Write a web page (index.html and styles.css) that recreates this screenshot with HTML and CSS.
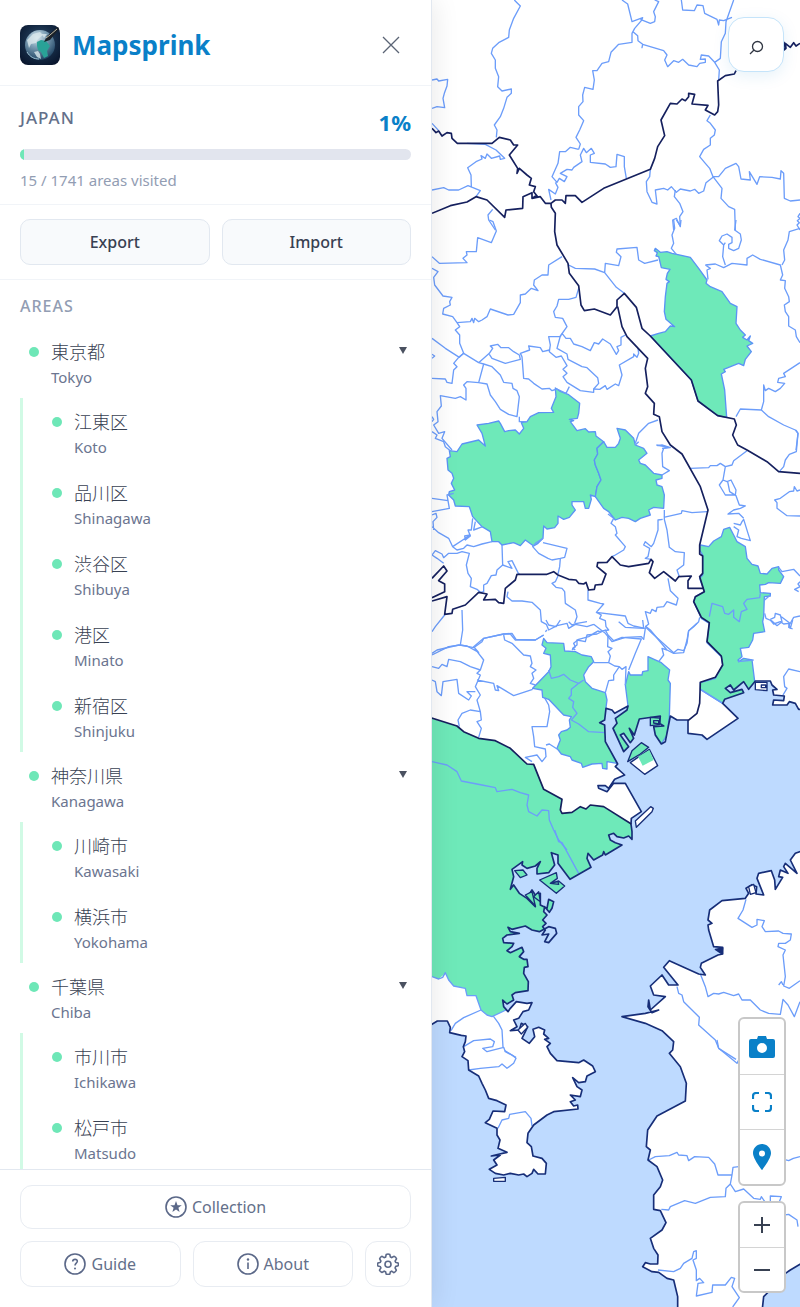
FILE: index.html
```html
<!DOCTYPE html>
<html lang="en">
<head>
<meta charset="utf-8">
<meta name="viewport" content="width=device-width, initial-scale=1">
<title>Mapsprink</title>
<link rel="stylesheet" href="styles.css">
</head>
<body>
<div class="app">
  <aside class="sidebar">
    <header class="brand">
      <svg class="logo" viewBox="0 0 40 40" aria-hidden="true">
        <defs>
          <radialGradient id="space" cx=".5" cy=".4" r=".7"><stop offset="0" stop-color="#31506f"/><stop offset=".6" stop-color="#142943"/><stop offset="1" stop-color="#08142b"/></radialGradient>
          <radialGradient id="globe" cx=".4" cy=".25" r=".8"><stop offset="0" stop-color="#dceaf0"/><stop offset=".4" stop-color="#7d9fb5"/><stop offset="1" stop-color="#183c5c"/></radialGradient>
        </defs>
        <rect width="40" height="40" rx="8" fill="url(#space)"/>
        <circle cx="20" cy="20" r="15" fill="url(#globe)"/>
        <path d="M7 15l6-6 7-2 3 3-5 4-2 4-5 1-2 4zM14 27l4-1 2 3 1 5-4-2zM22 9l5 0-3 4z" fill="#dbe8ec" opacity=".8"/>
        <path d="M17 17l4-2 5 1 4 5-3 5 1 5-4 2-3-6-3-2-1-4z" fill="#29a297"/>
        <path d="M7 27c3 5 7 7 12 7" fill="none" stroke="#9fc3d4" stroke-width="1"/>
        <path d="M24 17l3-6L38 2l1 2-9 11z" fill="#1a2128"/>
        <path d="M26 13l4-3 7-6" stroke="#c1bba6" stroke-width="1" fill="none"/>
      </svg>
      <h1 class="title">Mapsprink</h1>
      <button class="close" type="button" aria-label="Close"><svg viewBox="0 0 18 18"><path d="M1 1l16 16M17 1L1 17"/></svg></button>
    </header>
    <section class="progress">
      <div class="progress-head"><h2 class="country">JAPAN</h2><strong class="percent">1%</strong></div>
      <div class="track"><div class="fill" style="width:1%"></div></div>
      <p class="count">15 / 1741 areas visited</p>
    </section>
    <section class="transfer">
      <button class="soft" type="button">Export</button>
      <button class="soft" type="button">Import</button>
    </section>
    <section class="areas">
      <h2 class="areas-title">AREAS</h2>
      <ul class="regions">
        <li>
          <div class="area"><i class="dot"></i><span class="names"><b lang="ja">東京都</b><span>Tokyo</span></span><button class="caret" type="button" aria-label="Collapse Tokyo"></button></div>
          <ul class="cities">
            <li class="area"><i class="dot"></i><span class="names"><b lang="ja">江東区</b><span>Koto</span></span></li>
            <li class="area"><i class="dot"></i><span class="names"><b lang="ja">品川区</b><span>Shinagawa</span></span></li>
            <li class="area"><i class="dot"></i><span class="names"><b lang="ja">渋谷区</b><span>Shibuya</span></span></li>
            <li class="area"><i class="dot"></i><span class="names"><b lang="ja">港区</b><span>Minato</span></span></li>
            <li class="area"><i class="dot"></i><span class="names"><b lang="ja">新宿区</b><span>Shinjuku</span></span></li>
          </ul>
        </li>
        <li>
          <div class="area"><i class="dot"></i><span class="names"><b lang="ja">神奈川県</b><span>Kanagawa</span></span><button class="caret" type="button" aria-label="Collapse Kanagawa"></button></div>
          <ul class="cities">
            <li class="area"><i class="dot"></i><span class="names"><b lang="ja">川崎市</b><span>Kawasaki</span></span></li>
            <li class="area"><i class="dot"></i><span class="names"><b lang="ja">横浜市</b><span>Yokohama</span></span></li>
          </ul>
        </li>
        <li>
          <div class="area"><i class="dot"></i><span class="names"><b lang="ja">千葉県</b><span>Chiba</span></span><button class="caret" type="button" aria-label="Collapse Chiba"></button></div>
          <ul class="cities">
            <li class="area"><i class="dot"></i><span class="names"><b lang="ja">市川市</b><span>Ichikawa</span></span></li>
            <li class="area"><i class="dot"></i><span class="names"><b lang="ja">松戸市</b><span>Matsudo</span></span></li>
          </ul>
        </li>
      </ul>
    </section>
    <footer class="footer">
      <button class="ghost" type="button"><svg class="icon" viewBox="0 0 22 22"><circle cx="11" cy="11" r="10"/><path class="solid" d="M11 5l1.500 4.200h4.300l-3.400 2.600 1.200 4.200L11 13.500 7.400 16l1.200-4.200-3.400-2.600h4.300z"/></svg><span>Collection</span></button>
      <div class="footer-row">
        <button class="ghost grow" type="button"><svg class="icon" viewBox="0 0 22 22"><circle cx="11" cy="11" r="10"/><path d="M8.700 8.500c.2-3 4.900-2.700 4.600 0-.2 1.700-2.300 1.700-2.300 4"/><circle class="solid" cx="11" cy="15.500" r="1"/></svg><span>Guide</span></button>
        <button class="ghost grow" type="button"><svg class="icon" viewBox="0 0 22 22"><circle cx="11" cy="11" r="10"/><path d="M11 9.500V16"/><circle class="solid" cx="11" cy="6.500" r="1.200"/></svg><span>About</span></button>
        <button class="ghost gear" type="button" aria-label="Settings"><svg class="icon" viewBox="0 0 22 22"><path d="M9.200 1.500q1.800-1 3.600 0l.6 2.400 1.300.6 2.300-1.200q2 .6 2.500 2.500l-1.400 2.300.6 1.300 2.300.6q1 1.500 0 2.800l-2.300.7-.6 1.400 1.200 2.200q-.5 2-2.500 2.500l-2.100-1.400-1.300.6-.6 2.300q-1.800.8-3.600 0l-.6-2.300-1.400-.6-2.200 1.200q-2-.5-2.500-2.300l1.400-2.200-.6-1.300-2.300-.6q-1-1.500 0-3l2.300-.6.6-1.300-1.200-2.300q.5-1.900 2.300-2.500l2.200 1.400 1.400-.6z"/><circle cx="11" cy="11.200" r="3"/></svg></button>
      </div>
    </footer>
  </aside>
  <main class="map">
    <svg class="canvas" viewBox="0 0 1104 3921" preserveAspectRatio="xMinYMin slice" role="img" aria-label="Map of visited areas">
      <g class="visited">
        <path transform="translate(0 660)" d="M670 85L685 97 705 95 720 100 775 112 800 145 825 180 822 190 835 200 870 215 895 250 915 260 912 310 925 330 940 345 932 352 945 360 955 348 950 362 962 370 945 378 958 395 940 418 935 437 920 430 875 448 880 455 868 462 878 510 884 592 857 587 798 543 778 480 655 348 680 340 700 335 715 318 728 320 702 298 697 275 700 230 705 190 712 185 702 178 706 160 714 148 688 143 683 122 680 110 672 108 676 98 667 92z"/>
        <path transform="translate(0 1290)" d="M370-126L385-116 410-106 443-80 440-50 436-35 412-32 425-28 415-25 435 2 460-4 470 6 490 5 492 18 515 35 495 55 497 72 487 90 490 105 500 130 507 150 495 170 490 200 475 195 478 208 470 235 460 235 455 215 420 215 420 225 430 240 412 262 395 268 378 258 378 280 368 293 345 297 335 288 333 325 318 340 305 348 280 330 265 347 245 338 210 345 200 335 180 335 175 305 150 290 122 260 112 230 70 228 65 210 50 195 52 185 68 180 58 160 65 145 60 130 48 120 45 85 55 80 52 62 75 65 90 42 140 30 160 48 150 10 135-15 170-20 200-27 205-20 218 5 230 2 250 0 262 12 275-5 268-22 285-25 295-40 320-52 365-53 358-65 372-100z"/>
        <path transform="translate(0 1290)" d="M515 35L525 52 550 52 560 40 565 25 555-5 580 0 605 25 610 45 635 55 645 70 620 90 625 100 640 105 665 130 690 135 690 145 672 150 675 165 690 170 697 195 695 235 665 232 650 240 655 255 625 265 610 275 590 265 570 262 550 270 530 245 515 235 490 200 495 170 507 150 500 130 490 105 487 90 497 72 495 55z"/>
        <path transform="translate(0 1290)" d="M805 345L830 350 845 333 868 320 875 298 893 292 905 315 915 335 940 350 945 385 960 403 978 408 985 430 1005 432 1020 415 1040 410 1040 420 1055 440 1045 460 1010 458 1000 463 983 465 985 488 1015 490 1015 498 997 500 995 560 992 575 998 605 965 610 962 630 950 652 925 655 930 680 918 690 920 695 935 685 960 690 970 770 950 800 872 820 805 778 805 758 850 745 872 705 868 680 825 638 832 580 808 565 785 515 790 500 817 485 803 445 812 435 812 375 803 360z"/>
        <path transform="translate(0 1860)" d="M335 55L345 68 395 70 398 93 430 95 450 105 478 110 485 125 470 140 455 165 460 185 480 205 520 218 525 240 522 262 520 340 540 400 555 430 525 425 525 447 512 445 510 430 480 432 452 442 448 430 420 420 415 410 388 402 375 385 385 360 380 345 388 335 405 330 415 322 412 300 418 290 395 285 350 238 332 232 330 210 302 205 350 155 357 140 355 105 335 100 342 85 330 75z"/>
        <path transform="translate(0 1860)" d="M590 155L595 165 630 165 632 155 648 152 648 110 688 128 713 150 708 180 715 190 712 290 705 345 688 372 660 340 590 380 575 395 543 325 550 295 588 258 580 195z"/>
        <path class="plain" d="M-10 2153L75 2178 95 2195 140 2215 190 2222 235 2245 285 2292 305 2293 335 2368 390 2398 385 2430 390 2440 420 2437 445 2420 462 2427 475 2415 515 2420 598 2472 610 2560 420 2680 380 2660 380 2800 300 2870 300 2980 240 3010 222 3030 180 3050 165 3045 147 3030 132 2987 105 2987 100 2965 65 2958 50 2940 40 2920 20 2937 0 2930-10 2930z"/>
      </g>
      <g class="minor">
        <path d="M247 0L255 8 265 18 245 55 232 90 230 112 200 128 182 145 178 160 190 180 190 205 200 230 197 260 210 273 238 267 238 280 225 292 215 325 205 350 187 375 195 390 193 412"/>
        <path d="M0 240L15 237 20 243 47 238 45 258 37 280 33 295 38 323 15 320 0 325M570 0L587 12 600 65 632 53 628 62 608 85 600 100 600 127 560 133 537 157 530 185 510 190 495 212 482 212 487 240 483 268 458 262 452 285 453 305 440 320 440 345 455 362 443 390 432 412 445 432 440 448"/>
        <path d="M625 58L655 70 668 65 670 50 665 35 680 5 668 0M603 95L617 107 618 122 632 133 630 143 632 133 695 152 705 165 698 180 707 200 725 182 740 187 752 178 770 195 795 200 803 190 820 187 820 177 805 178 808 165 830 168 848 187 865 175 868 125 880 100 882 65 905 0M748 0L752 30 787 32 795 15 813 17 818 40 855 58 860 75 862 60 875 62 900 52M848 187L862 210 860 240"/>
        <path d="M440 448L415 442 400 455 383 455 378 490 360 530 375 547 382 535 397 545 405 530 385 520 405 508 420 510 425 502 450 485 445 465 455 445 463 458 478 445 487 460 475 465 475 487 520 492 535 502 552 500 555 463 577 470 577 500 583 535M370 547L378 562 370 582 350 568 357 600M655 508L653 530 643 545 645 575 660 607 675 612 670 570 695 565 707 570 718 560 733 577 745 567 775 573 788 568 800 580 815 573 822 548 845 530"/>
        <path d="M835 345L825 362 835 370 850 390 847 405 835 415 835 435 815 448 803 470 820 490 833 505 843 530 870 565 867 595 890 620 908 628 910 690M730 570L727 590 743 610 753 635 743 650 745 680 733 655 722 660 725 690M845 530L860 530 880 505 912 490 920 500 927 537 955 540 952 515 975 553 983 530 1020 532 1045 537 1047 512 1055 520 1057 595 1075 603 1104 600"/>
        <path d="M0 570L35 563 50 570 80 570 108 557 145 572 132 590M118 560L117 525 107 503 132 485 150 477 147 467 160 475 165 462 178 475 203 468 205 478 218 475 192 450 160 433 105 430M182 628L168 645 170 660 190 690M0 370L20 392M1104 640L1098 650 1104 655 1096 662 1102 668 1095 675 1104 690"/>
      </g>
      <g class="minor" transform="translate(0 660)">
        <path d="M172 0L183 5 193 33 178 68 137 53 133 95 103 95 105 105 93 115 105 128 22 130 0 110M0 145L18 155 5 172 8 195 33 228 60 232 53 245 55 255 35 265 32 282 62 290 75 308 83 320 70 330 83 345 83 370 95 400 82 412 40 385 0 355"/>
        <path d="M75 308L115 305 120 295 125 308 128 295 140 305 150 300 165 290 175 267 228 285 245 283 265 248 265 225 280 222 298 205 318 212 305 195 307 180 330 165 348 165 350 135 390 110M410 135L430 145 488 147 518 158 553 202 577 220M518 158L520 130 560 137 567 110 553 97 555 87 615 82 620 120 638 130 678 120"/>
        <path d="M440 205L432 232 410 238 380 238 375 258 365 275 370 292 392 295 405 320 385 348 375 385 405 402 408 418 450 440 465 443 497 473 500 490 485 507 485 517 445 512 405 487 393 470 405 460 393 448 405 437 388 408 372 412 352 395 355 375 350 350 385 350 390 340 402 355 415 355 425 372 450 380 475 392 487 368 500 372 512 357 535 372 553 403 560 392 555 380 567 375 567 352 580 345"/>
        <path d="M270 410L265 400 293 390 290 378 325 383 332 395 352 390M270 410L275 475 290 477 305 490 330 507 352 505 360 512 375 507 402 520 412 500M485 507L503 508 520 497 525 508 550 492 560 497 570 465 562 435 605 410 605 402 615 412 620 400 618 385"/>
        <path d="M95 400L82 410 65 430 75 440 65 450 60 490 45 487 40 477 0 475M95 400L140 428 172 400 182 385 175 378 197 373 207 383 230 383 245 395 262 405 265 418 220 430 180 415 172 403M140 428L155 432 140 488 165 492 175 525 190 545 205 568 230 583 255 590 262 530 255 512 243 505 240 490 215 487 205 465 180 440 155 432M140 488L105 485 95 495 102 505 102 540 85 530 70 535 25 527 28 558 15 575 18 605 5 615 20 640 38 635 30 655 60 690M0 590L5 598 0 605M0 403L8 408 0 415M262 590L262 605 285 605"/>
        <path d="M725 0L728 25 720 45 725 70 718 85 733 103M733 0L745 18 747 0M912 0L908 30 925 42 928 60 920 85 905 92 890 85 890 73 900 68 900 52 885 42 870 48 862 62 875 75 880 68M875 75L872 110 880 135M820 135L835 145 825 150 828 178M820 135L850 132 875 143 900 130 945 135 945 115 962 105 985 118 1045 135 1052 165 1045 180 1060 182 1058 205 1070 230 1072 245 1057 255 1060 275 1070 290 1070 318 1090 330 1093 350 1104 368M1104 25L1072 35 1068 60 1055 90 1058 120 1050 135"/>
        <path d="M1104 428L1055 460 1060 470 1040 475 1037 487 1058 490 1045 505 1030 515 1010 505 1000 512 995 495 995 545 988 570 925 567 912 590M988 570L1010 590 1055 615 1090 630 1098 640 1092 690M610 670L620 640 650 610 678 600M675 677L690 675 715 683 690 685"/>
      </g>
      <g class="minor" transform="translate(0 1290)">
        <path d="M0 5L15 15 10 25 35 35 40 50 55 62M0 205L48 212 45 195 65 190M48 212L52 235 0 245M0 290L20 308 50 325 62 350 115 315 98 318 100 330 115 318 108 300 118 300 122 265M130 275L125 300 152 290M0 255L12 250 15 262 3 275 5 300M62 350L75 360 95 355 105 345 125 350 150 342 180 335M0 375L10 362 30 372 35 383 50 370 75 370 90 365 112 370 103 405 108 430 118 445 115 470 135 478 145 487 155 485 155 465 165 460 178 437 192 435 195 420 212 405 240 415 228 395 240 392 258 428 262 432"/>
        <path d="M210 345L212 405M0 375L15 385 35 400M333 325L310 340 302 350 320 370 348 385 360 390 385 385 398 382 405 355 333 338M385 385L383 410 378 432M528 252L545 265 537 280 550 290 555 310 550 315 580 350 575 360 550 375 540 380M695 262L748 250 750 242 780 248 825 245M697 240L697 268 705 300 712 352 730 365 757 368 755 405 735 420 742 440M692 268L678 270 678 300 665 340 658 350 640 335 635 345 653 355 648 380 640 385 657 388"/>
        <path d="M775 115L830 113 835 107 855 107 865 100 880 110 900 105 905 92 945 62M880 110L873 150 885 155 897 150 912 180 910 195 880 195 862 165 873 150M887 155L893 185 912 197 922 225 940 228 925 235 905 240 888 252 920 250 935 265M905 280L925 285 930 275 935 268 948 310 955 332 928 325 915 320 920 300 905 290M620 35L610 45M673 45L710 52 695 55 690 70 692 110 712 122 690 135M1092 0L1098 10 1093 65 1072 73 1060 90 1055 110 1042 125"/>
        <path d="M1104 258L1065 257 1035 235 1035 218 1028 210 1045 205 1072 185 1085 183 1087 170 1095 183 1104 180M1040 412L1050 425 1085 418 1104 438M1104 455L1098 462 1104 470 1088 478 1100 485M998 510L1015 495M998 550L1002 565 1020 573 1035 587 1050 575 1045 555 1030 550 1028 562 1015 568M1048 560L1072 578 1070 592 1082 597M1072 585L1085 562 1104 558"/>
        <path d="M228 485L225 500 240 513 270 513 300 517 325 540 328 575 343 583 350 600 375 587 405 580 410 595 430 583 465 590 485 583M378 438L370 455 360 460 372 472 390 475 398 485 400 520 430 540 435 560 428 580M468 480L468 510 505 520 515 522 493 547 508 555 503 565 520 572 522 590 530 600 498 605M493 547L580 558 588 580 605 588 640 595 635 628 628 620 580 622 540 635 520 610 485 583M640 590L650 582 640 545 655 550 660 538 672 545 675 532 695 530 705 515 733 525 738 505 715 482 708 445"/>
        <path d="M90 540L92 600 85 645 125 653 150 635 155 625 215 612 240 610 252 628 310 630 335 615M340 605L345 600M500 602L485 610 495 605 470 620 440 628 425 640 430 650 420 660M640 590L650 600 660 610 725 668 738 658 755 662 765 640 770 602 785 590 800 575 803 562M0 675L50 650 85 645M0 605L10 590 38 555M832 560L840 520 872 530 878 550 890 553 905 540 905 562 922 575 928 545 945 538 935 520 945 508 983 503 985 490"/>
      </g>
      <g class="minor" transform="translate(0 1860)">
        <path d="M0 100L15 90 80 75 105 78 140 97 125 80 155 55 215 42 235 42 250 60 310 60 335 45M128 85L155 120 145 150 115 140 85 125 50 118 45 140 30 133 20 145 0 140M215 45L218 60 240 70 275 105 295 108 300 130 295 140 312 150 300 160 305 175 295 190 310 195M135 180L185 190 190 210 200 212 195 197 225 215 245 227 302 208M145 150L135 160 145 165 130 200 145 225 135 240 145 275 115 270 90 280 78 300 82 320"/>
        <path d="M0 180L10 185 15 215 28 227 33 185 75 178 80 220 110 240 118 228 105 215 130 215M145 275L148 300 135 305 148 325 140 352M337 232L350 255 353 275 345 320 300 320 305 350 308 380 340 387 342 410 330 425 315 405 280 412 300 425M342 375L352 372 380 390M350 150L358 175 380 170 395 163 415 180 440 190 455 180M440 190L418 208 418 225 410 235 425 245 422 262 435 280 418 300 440 312 470 335 520 338"/>
        <path d="M430 90L422 85 435 75 435 60 460 65 465 45 495 42 520 30 528 45 527 80 540 85 528 95 535 108 530 128 485 128M528 45L545 62 570 52 628 57 610 100 590 150M530 128L548 138 562 140 570 148 582 140 580 195M562 140L545 165 545 180 530 182 520 218M640 18L655 30 705 90 690 85 695 105 680 125M705 90L725 100 755 98 765 60 770 32 795 10M632 0L635 25 580 22 560 5M805 208L872 250M965 120L918 125M1104 155L1070 147 1055 170 1058 200 1065 205 1053 225M1015 0L1025 12 1045 5 1055 12 1070 10 1075 25 1082 0M385 0L372 20 350 15 342 0M410 5L420 15 435 10 465 5"/>
        <path d="M0 425L45 435 75 455 88 483 150 495 190 503 195 515 240 508 265 518 290 525 285 555 290 575 315 588 330 570 350 572 352 600 365 630 380 660 405 690"/>
      </g>
      <g class="minor" transform="translate(0 2490)">
        <path d="M368 0L380 35 390 38 440 130M0 440L20 447 32 442 40 428 50 450 65 468 100 475 105 497 132 497 147 540 165 555 180 560 222 540M147 540L95 563 70 580 57 602M185 560L200 580 210 600 213 652M95 650L125 632 175 627 187 635 182 650 152 655 165 665 215 652 220 665 252 682"/>
        <path d="M942 208L933 240 918 265 960 292 975 285 975 268 997 272 990 290 1000 305 1040 303 1053 310 1078 312 1075 330 1060 340 1040 340 1038 350 1060 360 1053 375 1060 440 1055 468 1072 475 1104 452M1040 465L1048 455 1053 465M805 432L820 470 828 500 845 490 860 492 875 487 905 497 920 492 930 510 955 510 985 540 1010 550 1045 553 1053 508 1068 525 1087 560 1104 515M735 470L740 490 750 495 755 515 802 562 800 585 850 630 860 655 912 688"/>
      </g>
      <g class="minor" transform="translate(0 3120)">
        <path d="M110 90L145 85 200 80 210 72 225 85 245 70 252 55 240 45 218 32M198 265L210 240 230 235 233 223 280 215 297 235 300 258M855 0L860 25 915 70 920 60M650 360L670 350 712 347 735 337 740 345 765 347 770 362 788 350 830 352 848 372 858 405 900 405 903 382 920 380M1056 315L1056 332M1056 358L1070 362 1084 355 1104 350M900 405L895 432 882 445 880 470 835 472 790 490 758 482 715 500 710 510 688 508M895 432L910 455 935 447 965 475 985 478 988 470 1000 487M1015 490L1015 468 1048 470 1040 490M1056 525L1070 523 1095 540 1098 560"/>
        <path d="M678 690L725 695 745 685 755 670 780 655 785 635 793 632 793 655 783 660 793 690 793 722 803 715 815 728 798 730 793 768 840 757 842 735 880 735 898 712 908 715 900 740 922 773 902 801"/>
      </g>
      <path class="sea" d="M-12 3935V3080L16 3063 46 3063 55 3082 53 3098 88 3106 102 3108 100 3125 94 3140 98 3155 90 3170 108 3182 110 3210 140 3228 150 3250 160 3270 170 3295 195 3302 222 3315 218 3335 183 3333 172 3358 160 3368 195 3385 195 3405 204 3420 198 3445 225 3457 190 3465 178 3468 205 3465 185 3480 195 3495 172 3508 190 3520 215 3525 235 3520 260 3525 275 3522 285 3530 300 3520 305 3508 318 3522 340 3522 343 3490 330 3475 303 3468 298 3440 285 3428 288 3400 305 3375 325 3360 345 3345 365 3335 438 3327 437 3315 425 3318 415 3305 430 3300 415 3285 445 3290 450 3270 435 3260 422 3233 440 3248 460 3245 465 3228 490 3215 482 3198 455 3180 440 3188 375 3182 355 3160 345 3140 355 3130 338 3118 350 3115 335 3102 338 3090 320 3082 303 3088 308 3110 292 3130 270 3115 280 3095 287 3080 268 3070 262 3090 235 3092 255 3080 245 3060 260 3055 273 3035 290 3030 300 3008 285 3010 253 3005 235 3025 228 3035 215 3020 212 3000 225 3012 245 3000 240 2985 250 2978 288 2972 289 2945 275 2920 277 2902 288 2900 285 2878 275 2878 262 2870 275 2855 270 2842 235 2858 225 2852 240 2840 245 2830 215 2828 212 2815 225 2805 262 2800 235 2795 228 2782 240 2788 280 2778 300 2790 322 2795 350 2780 370 2785 374 2800 350 2828 338 2825 350 2802 330 2805 340 2790 332 2780 342 2770 332 2760 345 2745 335 2735 338 2720 352 2737 360 2725 365 2705 350 2698 345 2725 325 2715 325 2680 310 2685 300 2670 290 2685 310 2720 285 2695 262 2680 245 2655 235 2668 245 2630 240 2608 272 2585 270 2595 285 2605 310 2598 325 2585 315 2605 315 2622 350 2618 368 2595 358 2558 378 2565 378 2590 414 2638 477 2602 465 2575 468 2560 485 2580 512 2565 515 2555 520 2565 570 2535 550 2528 535 2520 530 2505 545 2500 555 2510 575 2514 590 2508 600 2518 600 2495 597 2472 598 2455 628 2435 580 2350 545 2350 525 2375 500 2365 498 2357 520 2357 530 2365 548 2338 578 2325 550 2300 557 2292 520 2225 518 2175 503 2168 518 2160 522 2125 540 2130 548 2140 588 2118 585 2130 550 2155 555 2170 543 2185 575 2255 590 2240 565 2205 575 2200 595 2228 605 2215 592 2185 607 2205 622 2157 685 2148 683 2170 695 2178 665 2180 670 2205 688 2232 700 2225 715 2148 735 2160 768 2160 768 2200 810 2205 825 2218 918 2155 872 2110 878 2098 935 2078 930 2068 895 2078 880 2065 895 2055 905 2070 935 2045 950 2068 970 2043 1015 2043 1020 2055 1035 2068 1022 2070 1025 2085 1057 2088 1055 2102 1025 2100 1022 2115 1065 2115 1072 2105 1090 2110 1100 2128 1116 2128V2550L1090 2560 1075 2580 1095 2620 1060 2590 1055 2600 1068 2620 1045 2610 1040 2630 1052 2632 1030 2668 1028 2640 1018 2612 980 2620 975 2635 995 2685 972 2682 974 2660 960 2654 942 2665 950 2680 940 2695 870 2702 833 2730 828 2760 840 2770 828 2775 830 2790 845 2840 872 2842 872 2862 858 2865 808 2890 805 2902 820 2925 800 2922 712 2882 695 2902 738 2955 710 2955 690 2925 655 2958 665 2985 700 2990 655 3030 650 3000 648 3020 660 3038 680 3030 640 3040 570 3050 640 3070 690 3092 725 3125 722 3150 712 3160 745 3200 763 3250 760 3303 675 3348 647 3390 643 3440 655 3450 648 3480 675 3500 692 3540 685 3560 665 3585 665 3628 685 3632 702 3668 690 3690 655 3715 665 3745 678 3765 677 3792 655 3792 640 3788 632 3800 660 3815 680 3817 705 3835 725 3840 737 3890 737 3935z"/>
      <path class="sea" d="M990 3935L995 3890 1015 3870 1056 3823 1075 3810 1104 3793 1116 3785V3935z"/>
      <g class="island" transform="translate(0 1860)">
        <path d="M595 428L652 388 677 437 638 463z"/><path d="M610 603L656 560 664 565 660 575 613 622z"/>
        <path class="green" d="M587 425L600 392 628 368 650 382 625 402z"/><path class="green plain" d="M618 410L652 390 665 420 632 437z"/>
        <path class="green" d="M655 292L683 294 683 314 655 317zM665 302L680 302 680 312 665 309z"/><path d="M970 187L1005 187 1005 212 970 209zM988 195L1001 195 1001 203 988 203z"/>
      </g>
      <g class="island" transform="translate(0 2490)">
        <path class="green" d="M323 150L373 128 376 145 355 160 380 153 398 168 373 190zM355 160L378 155 380 163z"/><path class="green" d="M248 122L273 120 285 135 265 143zM280 195L300 185 310 228zM305 200L320 185 325 215z"/>
        <path d="M258 600L280 580 287 592 268 612zM185 1045L220 1042 220 1054 185 1054z"/><path d="M950 170L965 163 972 188 955 193z"/><path class="dark" d="M850 358L872 354 870 372z"/>
      </g>
      <g class="major">
        <path d="M0 385L12 398 20 393 30 408 45 398 58 400 60 415 76 430 180 430 202 412 235 420 245 435 257 435 232 465 257 505 255 520 262 505 285 525 298 535 292 555 310 560 305 575 317 590 300 595 325 590 340 610 357 610 370 600 390 600 400 610 402 587 430 587 450 607 515 565 655 508 668 475 677 440 698 407 687 360 715 310 735 312 750 297 760 302 770 290 770 280 788 283 780 312 828 316 820 330 848 345 857 335 860 315 857 243 880 227 907 222 912 212M0 640L55 617 105 606 132 590 165 600 218 652 222 630 272 625 273 590 300 578 300 595 315 585M357 610L358 622 370 640 368 695 375 735 408 790 412 820 440 857 447 915 457 932 487 927 535 945 555 920 555 900 577 880 613 922 630 985 655 1008 778 1140 798 1203 857 1247 907 1257 913 1275 902 1305 917 1335 945 1350 1005 1385 1040 1415 1104 1420"/>
        <path d="M557 920L570 980 585 1010 647 1075 640 1105 647 1160 640 1180 667 1210 665 1243 682 1250 690 1295 715 1335 750 1362 805 1460 828 1530 803 1635 803 1662 812 1668 812 1720 803 1730 817 1775 790 1790 785 1805 808 1852 832 1868 825 1925 868 1968 872 1995 850 2032 805 2047 803 2110 795 2140 768 2162M1056 125L1056 150 1062 145 1060 130 1075 142 1085 128 1092 138 1104 130"/>
        <path transform="translate(0 1290)" d="M0 445L35 408 45 423 20 452 38 462 38 485 0 503M0 513L45 500 38 553 60 550 62 538 100 525 140 487 165 492 155 510 190 508 200 518 215 520 220 475 250 450 255 433 345 433 365 425 378 435 410 448 432 450 440 460 455 462 462 457 470 480 487 478 490 465 510 463 522 432 495 410 497 398 525 397 540 380 565 405 590 410 650 400 657 388 663 395 652 428 668 445 695 425 730 453 740 440 778 438 768 452 768 475 815 475"/>
        <path d="M-5 2153L75 2178 95 2195 140 2215 190 2222 235 2245 285 2292 305 2293 335 2368 390 2398 385 2430 390 2440 420 2437 445 2420 462 2427 475 2415 515 2420 598 2472"/>
      </g>
    </svg>
    <button class="search" type="button" aria-label="Search"><svg viewBox="0 0 16 16"><circle cx="9.500" cy="6.500" r="5"/><path d="M6 10l-4 4"/></svg></button>
    <div class="controls">
      <div class="toolbox">
        <button type="button" aria-label="Take picture"><svg class="camera" viewBox="0 0 26 24"><path fill-rule="evenodd" d="M8 4l1-3h8l1 3h6q2 0 2 2v15q0 2-2 2H2q-2 0-2-2V6q0-2 2-2zM13 8a5 5 0 1 0 0 10 5 5 0 1 0 0-10z"/></svg></button>
        <button type="button" aria-label="Fit view"><svg class="frame" viewBox="0 0 20 20"><path d="M1 7V4q0-3 3-3h3M13 1h3q3 0 3 3v3M19 13v3q0 3-3 3h-3M7 19H4q-3 0-3-3v-3"/></svg></button>
        <button type="button" aria-label="My location"><svg class="pin" viewBox="0 0 18 26"><path fill-rule="evenodd" d="M9 0C4 0 0 4 0 9c0 6 9 17 9 17s9-11 9-17c0-5-4-9-9-9zm0 6.500a3 3 0 1 1 0 6 3 3 0 1 1 0-6z"/></svg></button>
      </div>
      <div class="toolbox zoom">
        <button type="button" aria-label="Zoom in"><svg viewBox="0 0 18 18"><path d="M9 1v16M1 9h16"/></svg></button>
        <button type="button" aria-label="Zoom out"><svg viewBox="0 0 18 18"><path d="M1 9h16"/></svg></button>
      </div>
    </div>
  </main>
</div>
</body>
</html>
```
FILE: styles.css
```css
* { box-sizing: border-box; }
body { margin: 0; font-family: "Noto Sans", "Noto Sans CJK JP", sans-serif; font-size: 16px; color: #384152; }
h1, h2, p, ul { margin: 0; padding: 0; }
ul { list-style: none; }
button { font: inherit; color: inherit; padding: 0; border: 0; background: none; cursor: pointer; }
svg { display: block; }

.app { display: flex; height: 100vh; overflow: hidden; }
.sidebar { width: 54%; display: flex; flex-direction: column; background: #fff; border-right: 1px solid #e2e8f0; box-shadow: 4px 0 24px rgba(0, 0, 0, .08); z-index: 1; }

.brand { display: flex; align-items: center; gap: 12px; height: 86px; flex: none; padding: 4px 20px 0; border-bottom: 1px solid #f1f4f8; }
.logo { width: 40px; height: 40px; }
.title { flex: 1; font-size: 26px; line-height: 36px; font-weight: 700; color: #0a80c8; }
.close { width: 40px; height: 40px; display: grid; place-items: center; }
.close svg { width: 18px; height: 18px; fill: none; stroke: #5b6475; stroke-width: 1.3; }

.progress { padding: 20px 20px 12px; border-bottom: 1px solid #f1f4f8; }
.progress-head { display: flex; justify-content: space-between; height: 43px; }
.country { font-size: 17px; line-height: 24px; font-weight: 500; color: #64708a; letter-spacing: 1px; }
.percent { font-size: 22px; line-height: 32px; color: #0a80c8; }
.track { height: 11px; border-radius: 6px; overflow: hidden; background: #e2e5ee; }
.fill { height: 100%; background: #6ee7b7; }
.count { margin-top: 8px; font-size: 15px; line-height: 24px; color: #929db3; }

.transfer { display: flex; gap: 12px; padding: 14px 20px; border-bottom: 1px solid #f1f4f8; }
.soft { flex: 1; height: 46px; font-size: 16px; font-weight: 500; border: 1px solid #e2e8f0; border-radius: 10px; background: #f8fafc; }

.areas { flex: 1; min-height: 0; overflow: hidden; padding: 14px 20px 0; }
.areas-title { font-size: 16px; line-height: 24px; font-weight: 500; letter-spacing: 1px; color: #929db3; margin-bottom: 10px; }
.area { display: flex; align-items: flex-start; height: 70px; padding: 9px 4px 0 9px; }
.dot { width: 10px; height: 10px; margin: 10px 12px 0 0; border-radius: 50%; background: #6ee7b7; }
.names { flex: 1; }
.names b, .names span { display: block; }
.names b { font-family: "Noto Sans CJK JP", sans-serif; font-size: 18px; line-height: 28px; font-weight: 300; color: #384152; }
.names span { font-size: 15px; line-height: 25px; color: #6b7590; }
.cities { display: flex; flex-direction: column; gap: 1px; border-left: 3px solid #d1fae5; }
.cities .area { padding-left: 29px; }
.caret { width: 8px; height: 7px; margin-top: 10px; background: #4a5160; clip-path: polygon(0 0, 100% 0, 50% 100%); }

.footer { flex: none; display: flex; flex-direction: column; gap: 12px; padding: 15px 20px 20px; border-top: 1px solid #e2e8f0; }
.footer-row { display: flex; gap: 12px; }
.ghost { height: 44px; display: flex; align-items: center; justify-content: center; gap: 5px; font-size: 16px; color: #64708a; border: 1px solid #e8ecf2; border-radius: 12px; }
.footer-row .ghost { height: 46px; }
.grow { flex: 1; }
.gear { width: 46px; }
.icon { width: 22px; height: 22px; fill: none; stroke: #5b6888; stroke-width: 1.6; }
.icon .solid { fill: #5b6888; stroke: none; }

.map { position: relative; flex: 1; min-width: 0; background: #fff; overflow: hidden; }
.canvas { width: 100%; height: 100%; stroke-linejoin: round; }
.visited { fill: #6ee9b9; stroke: #5b93f5; stroke-width: 4; }
.visited .plain, .island .plain { stroke: none; }
.minor { fill: none; stroke: #6c9dfa; stroke-width: 4; }
.sea { fill: #bedaff; stroke: #172e78; stroke-width: 5; }
.island { fill: #fff; stroke: #172e78; stroke-width: 4; }
.island .green { fill: #6ee9b9; }
.island .dark { fill: #172e78; }
.major { fill: none; stroke: #15205e; stroke-width: 5; }

.search { position: absolute; top: 17px; right: 16px; width: 56px; height: 55px; display: grid; place-items: center; background: #fff; border: 1px solid #c5e4fa; border-radius: 16px; box-shadow: 0 4px 16px rgba(14, 130, 200, .1); }
.search svg { width: 16px; height: 16px; margin-top: 6px; fill: none; stroke: #303642; stroke-width: 1.3; }
.controls { position: absolute; right: 14px; bottom: 14px; display: flex; flex-direction: column; gap: 15px; }
.toolbox { width: 48px; border: 2px solid #c8c8c8; border-radius: 6px; background: #fff; overflow: hidden; }
.toolbox button { width: 100%; height: 55px; display: grid; place-items: center; }
.toolbox button + button { border-top: 1px solid #d4d4d4; }
.zoom button { height: 44px; }
.camera { width: 26px; height: 24px; fill: #0a80c8; }
.frame { width: 20px; height: 20px; fill: none; stroke: #0a80c8; stroke-width: 2.2; }
.pin { width: 18px; height: 26px; fill: #0a80c8; }
.zoom svg { width: 18px; height: 18px; fill: none; stroke: #384152; stroke-width: 2; }
```
